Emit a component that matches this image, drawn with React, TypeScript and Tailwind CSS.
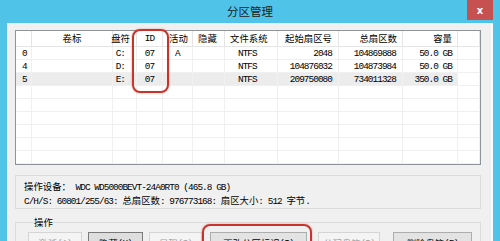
import React from "react";

const CJK = /[\u3000-\u9fff\uff00-\uffef]/;

// SimSun-like metrics: CJK glyphs full width, ASCII half width
function Txt({ s }: { s: string }) {
  const parts = s.match(/[\u3000-\u9fff\uff00-\uffef]+|[^\u3000-\u9fff\uff00-\uffef]+/g) ?? [];
  return (
    <>
      {parts.map((p, i) =>
        CJK.test(p) ? (
          <span key={i} className="font-['Noto_Sans_CJK_SC',sans-serif] tracking-normal">
            {p}
          </span>
        ) : (
          <span key={i} className="font-['Liberation_Mono',monospace] tracking-[-0.94px]">
            {p}
          </span>
        )
      )}
    </>
  );
}

const cols = [
  { head: "", hcls: "", dcls: "pl-[6px]" },
  { head: "卷标", hcls: "justify-center", dcls: "" },
  { head: "盘符", hcls: "justify-end pr-[6px]", dcls: "justify-end pr-[11px]" },
  { head: "ID", hcls: "justify-center", dcls: "justify-center" },
  { head: "活动", hcls: "pl-[6px]", dcls: "pl-[12px]" },
  { head: "隐藏", hcls: "pl-[5px]", dcls: "" },
  { head: "文件系统", hcls: "pl-[5px]", dcls: "pl-[13px]" },
  { head: "起始扇区号", hcls: "justify-end pr-[6px]", dcls: "justify-end pr-[6px]" },
  { head: "总扇区数", hcls: "justify-end pr-[5px]", dcls: "justify-end pr-[6px]" },
  { head: "容量", hcls: "justify-end pr-[5px]", dcls: "justify-end pr-[5px]" },
  { head: "", hcls: "", dcls: "" },
];

const rows: string[][] = [
  ["0", "", "C:", "07", "A", "", "NTFS", "2048", "104869888", "50.0 GB", ""],
  ["4", "", "D:", "07", "", "", "NTFS", "104876032", "104873984", "50.0 GB", ""],
  ["5", "", "E:", "07", "", "", "NTFS", "209750080", "734011328", "350.0 GB", ""],
  ...Array.from({ length: 6 }, () => Array(11).fill("")),
];

const grid =
  "grid grid-cols-[16px_81px_24px_26px_30px_32px_53px_61px_64px_55px_1fr]";

function Btn({ label, w, cls, disabled, dark }: { label: string; w: string; cls?: string; disabled?: boolean; dark?: boolean }) {
  return (
    <div
      className={`${w} ${cls ?? ""} h-[22px] flex items-center justify-center border ${
        disabled
          ? "border-[#d5d5d5] bg-[#f4f4f4] text-[#9d9d9d]"
          : dark
          ? "border-[#7a7a7a] bg-[#dedede] text-black"
          : "border-[#adadad] bg-[#e3e3e3] text-black"
      }`}
    >
      <Txt s={label} />
    </div>
  );
}

export default function App() {
  return (
    <div className="w-[500px] h-[241px] overflow-hidden bg-[#4fc3e8] flex flex-col text-[9.4px] leading-[13px] text-black whitespace-pre">
      {/* title bar */}
      <div className="h-[23px] shrink-0 grid grid-cols-[1fr_auto_1fr] items-start">
        <div />
        <div className="pt-[4px] text-[11.5px] leading-[15px] font-['Noto_Sans_CJK_SC',sans-serif] text-[#1b1b1b]">
          分区管理
        </div>
        <div className="flex justify-end pr-[7px]">
          <div className="w-[26px] h-[20px] bg-[#c75050] flex items-center justify-center text-white text-[10px] font-bold font-['DejaVu_Sans',sans-serif]">
            x
          </div>
        </div>
      </div>

      {/* client */}
      <div className="flex-1 ml-[7px] mr-[7px] bg-[#f0f0f0] pl-[8px] pr-[10px] pt-[7px] border-r-[2px] border-[#f7fbfd]">
        {/* list view */}
        <div className="relative h-[135px] border border-[#8e9399] bg-white overflow-visible">
          <div className={`${grid} h-[16px]`}>
            {cols.map((c, i) => (
              <div key={i} className={`flex items-center h-[16px] border-r border-b border-[#e5e5e5] ${c.hcls}`}>
                <Txt s={c.head} />
              </div>
            ))}
          </div>
          {rows.map((r, ri) => (
            <div key={ri} className={`${grid} h-[13px]`}>
              {r.map((v, ci) => (
                <div
                  key={ci}
                  className={`flex items-center h-[13px] border-r border-b border-[#f0f0f0] ${cols[ci].dcls} ${
                    ri === 2 && ci < 10 ? "bg-[#ececec]" : ""
                  }`}
                >
                  <Txt s={v} />
                </div>
              ))}
            </div>
          ))}
          {/* red highlight around ID column */}
          <div className="absolute left-[116px] top-[-2px] w-[37px] h-[64px] rounded-[8px] border-[2.5px] border-[#c8342c] shadow-[0_0_2px_rgba(200,52,44,0.5)]" />
        </div>

        {/* device info */}
        <div className="mt-[10px] h-[34px] border border-[#dcdcdc] pl-[8px] pt-[4px]">
          <div>
            <Txt s="操作设备： WDC WD5000BEVT-24A0RT0 (465.8 GB)" />
          </div>
          <div>
            <Txt s="C/H/S: 60801/255/63: 总扇区数: 976773168: 扇区大小: 512 字节." />
          </div>
        </div>

        {/* actions */}
        <fieldset className="mt-[7px] border border-[#dcdcdc] pl-[12px] pt-[3px] h-[60px]">
          <legend className="ml-[6px] px-0 text-[9.4px] leading-[13px]">
            <Txt s="操作" />
          </legend>
          <div className="relative flex">
            <Btn label="激活(A)" w="w-[54px]" disabled />
            <Btn label="隐藏(H)" w="w-[55px]" cls="ml-[6px]" dark />
            <Btn label="显现(S)" w="w-[53px]" cls="ml-[6px]" disabled />
            <Btn label="更改分区标识(I)" w="w-[97px]" cls="ml-[8px]" />
            <Btn label="分配盘符(D)" w="w-[62px]" cls="ml-[11px]" disabled />
            <Btn label="删除盘符(R)" w="w-[79px]" cls="ml-[13px]" />
            {/* red highlight around change-id button */}
            <div className="absolute left-[174px] top-[-8px] w-[110px] h-[36px] rounded-[8px] border-[2.5px] border-[#c8342c] shadow-[0_0_2px_rgba(200,52,44,0.5)]" />
          </div>
        </fieldset>
      </div>
    </div>
  );
}
